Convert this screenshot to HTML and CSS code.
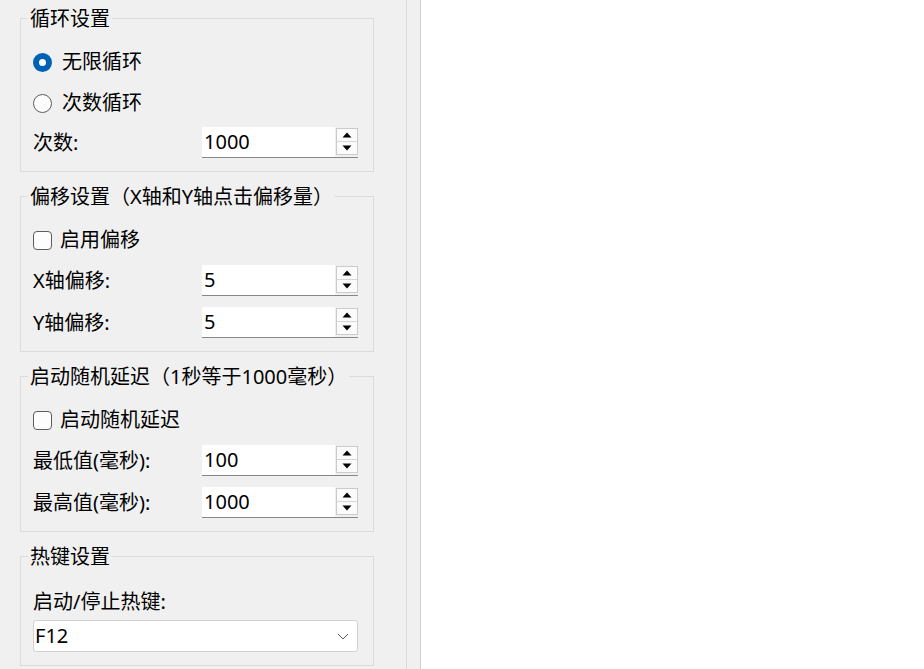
FILE: index.html
```html
<!DOCTYPE html>
<html lang="zh-CN">
<head>
<meta charset="utf-8">
<title>设置</title>
<link rel="stylesheet" href="styles.css">
</head>
<body>
<div class="panel">
  <fieldset class="group g1">
    <legend>循环设置</legend>
    <div class="rows">
      <div class="opt"><span class="radio checked"></span><span>无限循环</span></div>
      <div class="opt"><span class="radio"></span><span>次数循环</span></div>
      <div class="field">
        <span class="lbl">次数:</span>
        <div class="spin">
          <span class="val">1000</span>
          <span class="btns">
            <span class="btn"><svg width="10" height="6" viewBox="0 0 10 6"><path d="M0.5 5.5 L5 0.5 L9.5 5.5 Z" fill="#000"/></svg></span>
            <span class="btn"><svg width="10" height="6" viewBox="0 0 10 6"><path d="M0.5 0.5 L5 5.5 L9.5 0.5 Z" fill="#000"/></svg></span>
          </span>
        </div>
      </div>
    </div>
  </fieldset>

  <fieldset class="group g2">
    <legend>偏移设置（X轴和Y轴点击偏移量）</legend>
    <div class="rows">
      <div class="opt chk-row"><span class="check"></span><span>启用偏移</span></div>
      <div class="field">
        <span class="lbl">X轴偏移:</span>
        <div class="spin">
          <span class="val">5</span>
          <span class="btns">
            <span class="btn"><svg width="10" height="6" viewBox="0 0 10 6"><path d="M0.5 5.5 L5 0.5 L9.5 5.5 Z" fill="#000"/></svg></span>
            <span class="btn"><svg width="10" height="6" viewBox="0 0 10 6"><path d="M0.5 0.5 L5 5.5 L9.5 0.5 Z" fill="#000"/></svg></span>
          </span>
        </div>
      </div>
      <div class="field">
        <span class="lbl">Y轴偏移:</span>
        <div class="spin">
          <span class="val">5</span>
          <span class="btns">
            <span class="btn"><svg width="10" height="6" viewBox="0 0 10 6"><path d="M0.5 5.5 L5 0.5 L9.5 5.5 Z" fill="#000"/></svg></span>
            <span class="btn"><svg width="10" height="6" viewBox="0 0 10 6"><path d="M0.5 0.5 L5 5.5 L9.5 0.5 Z" fill="#000"/></svg></span>
          </span>
        </div>
      </div>
    </div>
  </fieldset>

  <fieldset class="group g2">
    <legend>启动随机延迟（1秒等于1000毫秒）</legend>
    <div class="rows">
      <div class="opt chk-row"><span class="check"></span><span>启动随机延迟</span></div>
      <div class="field">
        <span class="lbl">最低值(毫秒):</span>
        <div class="spin">
          <span class="val">100</span>
          <span class="btns">
            <span class="btn"><svg width="10" height="6" viewBox="0 0 10 6"><path d="M0.5 5.5 L5 0.5 L9.5 5.5 Z" fill="#000"/></svg></span>
            <span class="btn"><svg width="10" height="6" viewBox="0 0 10 6"><path d="M0.5 0.5 L5 5.5 L9.5 0.5 Z" fill="#000"/></svg></span>
          </span>
        </div>
      </div>
      <div class="field">
        <span class="lbl">最高值(毫秒):</span>
        <div class="spin">
          <span class="val">1000</span>
          <span class="btns">
            <span class="btn"><svg width="10" height="6" viewBox="0 0 10 6"><path d="M0.5 5.5 L5 0.5 L9.5 5.5 Z" fill="#000"/></svg></span>
            <span class="btn"><svg width="10" height="6" viewBox="0 0 10 6"><path d="M0.5 0.5 L5 5.5 L9.5 0.5 Z" fill="#000"/></svg></span>
          </span>
        </div>
      </div>
    </div>
  </fieldset>

  <fieldset class="group g4">
    <legend>热键设置</legend>
    <div class="hk-label">启动/停止热键:</div>
    <div class="combo">
      <span class="combo-val">F12</span>
      <svg class="chev" width="12" height="7" viewBox="0 0 12 7"><path d="M1 1 L6 6 L11 1" fill="none" stroke="#5f5f5f" stroke-width="1"/></svg>
    </div>
  </fieldset>
</div>
<div class="strip"></div>
<div class="main"></div>
</body>
</html>
```

FILE: styles.css
```css
html, body {
  margin: 0;
  padding: 0;
}
body {
  display: flex;
  height: 669px;
  overflow: hidden;
  background: #ffffff;
  font-family: "Noto Sans", "Noto Sans CJK SC", sans-serif;
  font-size: 20px;
  color: #000;
}
.panel {
  width: 407px;
  box-sizing: border-box;
  background: #f0f0f0;
  border-right: 1px solid #dadada;
  padding: 6px 0 0 20px;
  flex-shrink: 0;
}
.strip {
  width: 14px;
  box-sizing: border-box;
  background: #f0f0f0;
  border-right: 1px solid #cfcfcf;
  flex-shrink: 0;
}
.main {
  flex: 1;
  background: #fff;
}
.group {
  width: 354px;
  box-sizing: border-box;
  margin: 0 0 12px 0;
  border: 1px solid #dcdcdc;
  padding: 14px 15px 13px 12px;
  min-inline-size: 0;
}
.group legend {
  padding: 0 2px;
  margin-left: -5px;
  line-height: 25px;
  height: 25px;
  white-space: nowrap;
}
.rows {
  display: flex;
  flex-direction: column;
  gap: 10px;
}
.g2 .rows {
  gap: 11px;
}
.opt {
  display: flex;
  align-items: center;
  height: 31px;
  box-sizing: border-box;
  padding-top: 3px;
  line-height: 28px;
}
.radio {
  width: 19px;
  height: 19px;
  box-sizing: border-box;
  border-radius: 50%;
  border: 1px solid #5c5c5c;
  background: #fdfdfd;
  margin-right: 10px;
  flex-shrink: 0;
}
.radio.checked {
  border: 6.5px solid #0062b5;
  background: #ffffff;
}
.check {
  width: 19px;
  height: 19px;
  box-sizing: border-box;
  border: 1px solid #5c5c5c;
  border-radius: 4px;
  background: #fdfdfd;
  margin-right: 8px;
  flex-shrink: 0;
}
.field {
  display: grid;
  grid-template-columns: 169px 156px;
  align-items: center;
  height: 31px;
}
.lbl {
  line-height: 31px;
  white-space: nowrap;
}
.spin {
  display: flex;
  height: 31px;
  box-sizing: border-box;
  border-bottom: 1px solid #878787;
}
.val {
  width: 133px;
  background: #ffffff;
  padding-left: 2px;
  box-sizing: border-box;
  line-height: 30px;
  height: 30px;
}
.btns {
  display: flex;
  flex-direction: column;
  width: 22px;
  height: 27px;
  margin: 1px 0 0 1px;
  box-sizing: border-box;
  border: 1px solid #cbcbcb;
  background: #fbfbfb;
}
.btn {
  flex: 1;
  display: flex;
  align-items: center;
  justify-content: center;
}
.btn + .btn {
  border-top: 1px solid #d6d6d6;
}
.btn svg {
  display: block;
}
.hk-label {
  line-height: 37px;
  height: 37px;
  white-space: nowrap;
}
.combo {
  display: flex;
  align-items: center;
  justify-content: space-between;
  height: 32px;
  box-sizing: border-box;
  border: 1px solid #d2d2d2;
  border-radius: 3px;
  background: #ffffff;
  padding: 0 8px 0 1px;
}
.combo-val {
  line-height: 30px;
}
.chev {
  display: block;
}
```
